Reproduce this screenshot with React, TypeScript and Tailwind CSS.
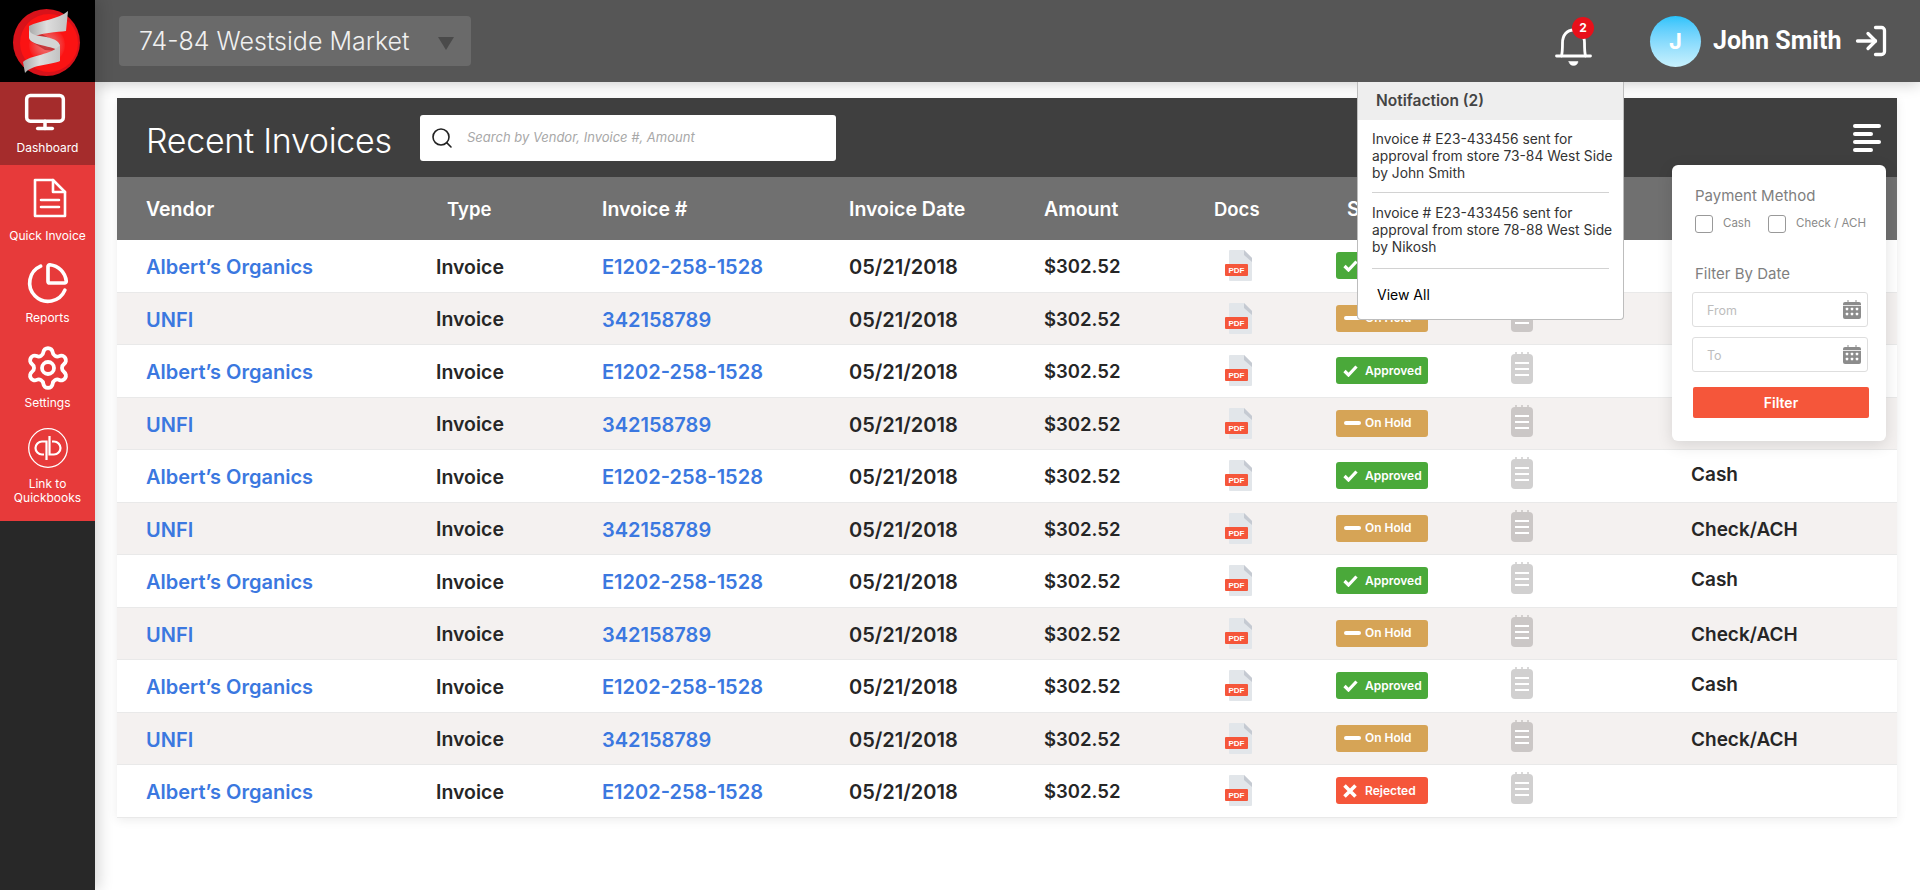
import { LogIn, Monitor, PieChart, Search, Settings } from 'lucide-react';

const FONT = "font-['Inter','Noto_Sans',sans-serif]";
const COLS = 'grid grid-cols-[290px_166px_247px_195px_170px_122px_175px_180px_1fr] items-center pl-[29px]';

type Status = 'Approved' | 'On Hold' | 'Rejected';

const rows: { vendor: string; invoice: string; status: Status; payment: string }[] = [
  { vendor: 'Albert’s Organics', invoice: 'E1202-258-1528', status: 'Approved', payment: '' },
  { vendor: 'UNFI', invoice: '342158789', status: 'On Hold', payment: '' },
  { vendor: 'Albert’s Organics', invoice: 'E1202-258-1528', status: 'Approved', payment: '' },
  { vendor: 'UNFI', invoice: '342158789', status: 'On Hold', payment: '' },
  { vendor: 'Albert’s Organics', invoice: 'E1202-258-1528', status: 'Approved', payment: 'Cash' },
  { vendor: 'UNFI', invoice: '342158789', status: 'On Hold', payment: 'Check/ACH' },
  { vendor: 'Albert’s Organics', invoice: 'E1202-258-1528', status: 'Approved', payment: 'Cash' },
  { vendor: 'UNFI', invoice: '342158789', status: 'On Hold', payment: 'Check/ACH' },
  { vendor: 'Albert’s Organics', invoice: 'E1202-258-1528', status: 'Approved', payment: 'Cash' },
  { vendor: 'UNFI', invoice: '342158789', status: 'On Hold', payment: 'Check/ACH' },
  { vendor: 'Albert’s Organics', invoice: 'E1202-258-1528', status: 'Rejected', payment: '' },
];

function Logo() {
  return (
    <svg width="94" height="82" viewBox="0 0 94 82">
      <defs>
        <radialGradient id="logoCore" cx="0.5" cy="0.5" r="0.5">
          <stop offset="0" stopColor="#f47a7a" />
          <stop offset="0.6" stopColor="#f04a4a" />
          <stop offset="1" stopColor="#fb1c1c" />
        </radialGradient>
        <linearGradient id="logoBand" x1="0" y1="0" x2="1" y2="0">
          <stop offset="0" stopColor="#a9a9a9" />
          <stop offset="0.45" stopColor="#dedede" />
          <stop offset="1" stopColor="#c2c2c2" />
        </linearGradient>
      </defs>
      <circle cx="46.5" cy="42.5" r="33.5" fill="#d8121a" />
      <circle cx="49" cy="43" r="29" fill="#fb1313" />
      <circle cx="47" cy="45" r="18" fill="url(#logoCore)" />
      <path d="M40 33 L60 44 L58 51 L45 50 L29 40 Z" fill="#a3131a" opacity="0.55" />
      <path d="M68 11 L66 31 C58 32 40 33 29 38 L29 26 C40 20 58 20 68 11 Z" fill="url(#logoBand)" />
      <path d="M29 28 L29 38 C30 42 36 44 45 46 C52 48 59 49 60 52 L60 45 C58 39 48 37 40 36 C33 35 29 33 29 28 Z" fill="#d4d4d4" />
      <path d="M60 45 L60 61 C52 65 32 64 25 73 L23 62 C30 55 52 55 60 45 Z" fill="url(#logoBand)" />
    </svg>
  );
}

function DocIcon() {
  return (
    <svg width="34" height="40" viewBox="0 0 34 40" fill="none" stroke="white" strokeWidth="2.6" strokeLinejoin="round" strokeLinecap="round">
      <path d="M2 2 H20 L32 14 V38 H2 Z" />
      <path d="M20 2 V14 H32" />
      <path d="M8 22 H26 M8 29 H26" />
    </svg>
  );
}

function QuickbooksIcon() {
  return (
    <svg width="40" height="40" viewBox="0 0 40 40" fill="none" stroke="white">
      <circle cx="20" cy="20" r="19.3" strokeWidth="1.3" />
      <path d="M18.5 32 V13.5 H14 a6.5 6.5 0 0 0 0 13 H16" strokeWidth="2.2" />
      <path d="M21.5 8 V26.5 H26 a6.5 6.5 0 0 0 0 -13 H24" strokeWidth="2.2" />
    </svg>
  );
}

function BellIcon() {
  return (
    <svg width="37" height="38" viewBox="0 0 37 38" fill="none" stroke="white" strokeWidth="2.8" strokeLinecap="round" strokeLinejoin="round">
      <path d="M1.5 28 H35.5" />
      <path d="M6.5 28 C7.5 24 7.5 20 7.5 15 C7.5 7 12 2 18.5 2 C25 2 29.5 7 29.5 15 C29.5 20 29.5 24 30.5 28" />
      <path d="M14 33.5 H23 a4.5 4 0 0 1 -9 0 Z" fill="white" strokeWidth="0.5" />
    </svg>
  );
}

function CalendarIcon() {
  return (
    <svg width="18" height="19" viewBox="0 0 18 19">
      <path d="M5 0 V3 M13 0 V3" stroke="#8c8c8c" strokeWidth="1" />
      <rect x="0" y="2" width="18" height="17" rx="2" fill="#8c8c8c" />
      <path d="M0 5.5 H18" stroke="white" strokeWidth="0.8" />
      {[4, 9, 14].map(x => [9, 14].map(y => <rect key={`${x}-${y}`} x={x - 1.2} y={y - 1.2} width="2.4" height="2.4" rx="0.5" fill="white" />))}
    </svg>
  );
}

function PdfIcon() {
  return (
    <svg width="27" height="31" viewBox="0 0 27 31">
      <path d="M4 1 a1 1 0 0 1 1 -1 H19 L27 8 V30 a1 1 0 0 1 -1 1 H5 a1 1 0 0 1 -1 -1 Z" fill="#e2e6ea" />
      <path d="M19 0 L27 8 V12 L19 5 Z" fill="#c5cad2" />
      <rect x="0" y="14" width="23" height="12" rx="1" fill="#f5563a" />
      <text x="11.5" y="23.2" textAnchor="middle" fontSize="8" fontWeight="700" fill="white" fontFamily="Liberation Sans, sans-serif">PDF</text>
    </svg>
  );
}

function NotesIcon({ shade }: { shade: boolean }) {
  const c = shade ? '#cbc7c6' : '#d1d0d0';
  return (
    <svg width="22" height="32" viewBox="0 0 22 32" className="-mt-[5px]">
      <path d="M5 0 V3 M11 0 V3 M17 0 V3" stroke={c} strokeWidth="1.6" />
      <rect x="0" y="2" width="22" height="30" rx="4" fill={c} />
      <path d="M4 11 H18 M4 17 H18 M4 23 H18" stroke="white" strokeWidth="1.8" />
    </svg>
  );
}

function StatusBadge({ status }: { status: Status }) {
  const bg = status === 'Approved' ? 'bg-[#4aa93a]' : status === 'On Hold' ? 'bg-[#d6a456]' : 'bg-[#f5563a]';
  return (
    <div className={`flex h-[27px] w-[92px] items-center rounded-[3px] pl-[7px] text-[12px] font-semibold text-white ${bg}`}>
      <span className="flex w-[22px] shrink-0 items-center">
        {status === 'Approved' && (
          <svg width="15" height="12" viewBox="0 0 15 12" fill="none" stroke="white" strokeWidth="3.2">
            <path d="M1.5 6 L5.5 10 L13.5 1.5" />
          </svg>
        )}
        {status === 'On Hold' && <span className="ml-[1px] h-[4px] w-[17px] rounded-full bg-white" />}
        {status === 'Rejected' && (
          <svg width="14" height="14" viewBox="0 0 14 14" fill="none" stroke="white" strokeWidth="3.6">
            <path d="M1.5 1.5 L12.5 12.5 M12.5 1.5 L1.5 12.5" />
          </svg>
        )}
      </span>
      {status}
    </div>
  );
}

function SideItem({ label, active, icon, h }: { label: React.ReactNode; active?: boolean; icon: React.ReactNode; h: string }) {
  return (
    <div className={`flex flex-col items-center text-center text-[12px] leading-[14px] text-white ${h} ${active ? 'bg-[#a52c2c]' : ''}`}>
      {icon}
      {label}
    </div>
  );
}

export default function App() {
  return (
    <div className={`relative flex h-[890px] w-[1920px] overflow-hidden bg-white text-[#262626] ${FONT}`}>
      <aside className="z-20 flex w-[95px] shrink-0 flex-col bg-[#282828] shadow-[4px_0_14px_rgba(0,0,0,0.16)]">
        <div className="h-[82px] w-[95px] bg-black">
          <Logo />
        </div>
        <div className="flex h-[439px] flex-col bg-[#e73a3a]">
          <SideItem h="h-[83px] pt-[10px]" active label="Dashboard" icon={<Monitor size={44} strokeWidth={1.9} color="white" className="-my-[2px] mb-[7px] -ml-[5px]" />} />
          <SideItem h="h-[83px] pt-[13px]" label="Quick Invoice" icon={<span className="mb-[11px] ml-[5px] block h-[40px]"><DocIcon /></span>} />
          <SideItem h="h-[84px] pt-[15px]" label="Reports" icon={<PieChart size={44} strokeWidth={2} color="white" className="-my-[2px] mb-[6px]" />} />
          <SideItem h="h-[83px] pt-[15px]" label="Settings" icon={<Settings size={48} strokeWidth={1.9} color="white" className="-my-[3px] mb-[4px]" />} />
          <SideItem h="h-[106px] pt-[13px]" label={<>Link to<br />Quickbooks</>} icon={<span className="mb-[9px] block h-[40px]"><QuickbooksIcon /></span>} />
        </div>
      </aside>

      <div className="flex min-w-0 flex-1 flex-col">
        <header className="z-10 flex h-[82px] shrink-0 items-center bg-[#565656] pl-[24px] pr-[31px] shadow-[0_2px_14px_rgba(0,0,0,0.2)]">
          <div className="flex h-[50px] w-[352px] items-center justify-between rounded-[4px] bg-[#6a6a6a] pl-[20px] pr-[17px] text-[25px] font-light text-[#f0f0f0]">
            <span className="pt-[2px]">74-84 Westside Market</span>
            <span className="mt-[5px] h-0 w-0 border-x-[8px] border-t-[13px] border-x-transparent border-t-[#4a4a4a]" />
          </div>
          <div className="relative ml-auto h-[38px] w-[37px] translate-y-[6px]">
            <BellIcon />
            <span className="absolute -top-[11px] left-[17px] flex h-[22px] w-[22px] items-center justify-center rounded-full bg-[#e8101a] text-[12px] font-bold text-white">2</span>
          </div>
          <div className="ml-[58px] flex h-[51px] w-[51px] items-center justify-center rounded-full bg-gradient-to-b from-[#27c3fb] to-[#c8f1fd] text-[22px] font-bold text-white">J</div>
          <span className="ml-[12px] w-[125px] whitespace-nowrap font-['Roboto',sans-serif] text-[25px] font-bold text-white">John Smith</span>
          <LogIn size={36} strokeWidth={2.2} color="white" className="ml-[15px]" />
        </header>

        <main className="pl-[22px] pr-[23px] pt-[16px]">
          <div className="bg-white shadow-[0_2px_10px_rgba(0,0,0,0.08)]">
            <div className="flex h-[79px] items-center bg-[#3f3f3f] pl-[29px] pr-[16px]">
              <h1 className="w-[274px] whitespace-nowrap pt-[6px] text-[34px] font-light tracking-[-0.3px] text-white">Recent Invoices</h1>
              <div className="flex h-[46px] w-[416px] items-center rounded-[3px] bg-white pl-[10px] text-[13px] italic text-[#a8a8a8]">
                <Search size={24} strokeWidth={1.6} color="#222" className="mr-[13px]" />
                Search by Vendor, Invoice #, Amount
              </div>
              <div className="ml-auto flex w-[28px] flex-col gap-[4px]">
                <span className="h-[4px] w-[28px] rounded-full bg-white" />
                <span className="h-[4px] w-[20px] rounded-full bg-white" />
                <span className="h-[4px] w-[28px] rounded-full bg-white" />
                <span className="h-[4px] w-[20px] rounded-full bg-white" />
              </div>
            </div>

            <div className={`${COLS} h-[63px] bg-[#707070] pt-[2px] text-[19.5px] font-semibold text-white`}>
              <span>Vendor</span>
              <span className="pl-[11px] text-[18.5px]">Type</span>
              <span>Invoice #</span>
              <span>Invoice Date</span>
              <span>Amount</span>
              <span className="text-[18.5px]">Docs</span>
              <span className="pl-[11px]">Status</span>
            </div>

            {rows.map((r, i) => (
              <div key={i} className={`${COLS} h-[52.5px] border-b border-[#e9e9e9] text-[19.5px] font-semibold ${i % 2 ? 'bg-[#f4f1f0]' : 'bg-white'}`}>
                <span className="whitespace-nowrap pt-[3px] text-[20px] text-[#3b78e0]">{r.vendor}</span>
                <span className="pt-[3px]">Invoice</span>
                <span className="whitespace-nowrap pt-[3px] text-[20px] text-[#3b78e0]">{r.invoice}</span>
                <span className="pt-[3px] text-[20px]">05/21/2018</span>
                <span className="pt-[3px] text-[18.5px]">$302.52</span>
                <span className="pl-[11px]"><PdfIcon /></span>
                <StatusBadge status={r.status} />
                <NotesIcon shade={i % 2 === 1} />
                <span className={`text-[19px] ${r.payment === 'Cash' ? '-mt-[1px]' : 'pt-[4px]'}`}>{r.payment}</span>
              </div>
            ))}
          </div>
        </main>
      </div>

      {/* notification dropdown */}
      <div className="absolute left-[1357px] top-[82px] z-30 h-[238px] w-[267px] rounded-b-[4px] border border-t-0 border-[#bdbdbd] bg-white">
        <div className="flex h-[38px] items-center bg-[#eeeeee] pl-[18px] text-[15.5px] font-semibold text-[#444]">Notifaction (2)</div>
        <div className="mx-[14px] whitespace-nowrap border-b border-[#d2d2d2] pb-[10px] pt-[11px] text-[13.8px] leading-[17px] text-[#333]">
          Invoice # E23-433456 sent for<br />approval from store 73-84 West Side<br />by John Smith
        </div>
        <div className="mx-[14px] whitespace-nowrap border-b border-[#d2d2d2] pb-[12px] pt-[12px] text-[13.8px] leading-[17px] text-[#333]">
          Invoice # E23-433456 sent for<br />approval from store 78-88 West Side<br />by Nikosh
        </div>
        <div className="pl-[19px] pt-[17px] text-[14px] leading-[17px] text-black">View All</div>
      </div>

      {/* filter popover */}
      <div className="absolute left-[1672px] top-[165px] z-30 h-[276px] w-[214px] rounded-[6px] bg-white px-[20px] pt-[21px] shadow-[0_4px_16px_rgba(0,0,0,0.12)]">
        <div className="ml-[3px] text-[15px] leading-[20px] text-[#7f7f7f]">Payment Method</div>
        <div className="ml-[3px] mt-[9px] flex items-center whitespace-nowrap text-[11.5px] text-[#8a8a8a]">
          <span className="h-[18px] w-[18px] shrink-0 rounded-[3px] border border-[#999]" />
          <span className="ml-[10px] w-[46px]">Cash</span>
          <span className="h-[18px] w-[18px] shrink-0 rounded-[3px] border border-[#999]" />
          <span className="ml-[10px]">Check / ACH</span>
        </div>
        <div className="ml-[3px] mt-[31px] text-[15px] leading-[20px] text-[#7f7f7f]">Filter By Date</div>
        <div className="mt-[8px] flex h-[35px] w-[176px] items-center justify-between rounded-[3px] border border-[#dedede] pl-[14px] pr-[6px] text-[12.5px] text-[#bdbdbd]">
          <span className="pt-[3px]">From</span> <CalendarIcon />
        </div>
        <div className="mt-[10px] flex h-[35px] w-[176px] items-center justify-between rounded-[3px] border border-[#dedede] pl-[14px] pr-[6px] text-[12.5px] text-[#bdbdbd]">
          <span className="pt-[3px]">To</span> <CalendarIcon />
        </div>
        <div className="ml-[1px] mt-[15px] flex h-[31px] w-[176px] items-center justify-center rounded-[2px] bg-[#f5563a] text-[14px] font-semibold text-white">Filter</div>
      </div>
    </div>
  );
}
